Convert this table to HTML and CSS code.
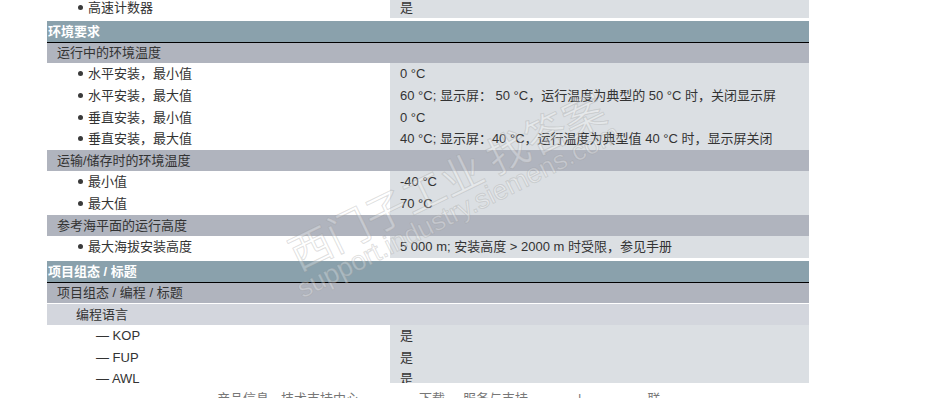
FILE: index.html
```html
<!DOCTYPE html>
<html lang="zh-CN">
<head>
<meta charset="utf-8">
<title>技术参数</title>
<link rel="stylesheet" href="styles.css">
</head>
<body>
<div class="page">
  <div class="viewport">
    <div class="sheet">
      <div class="row"><div class="lbl bullet">高速计数器</div><div class="val">是</div></div>
      <div class="hdr">环境要求</div>
      <div class="sub first">运行中的环境温度</div>
      <div class="row"><div class="lbl bullet">水平安装，最小值</div><div class="val">0 °C</div></div>
      <div class="row"><div class="lbl bullet">水平安装，最大值</div><div class="val">60 °C; 显示屏： 50 °C，运行温度为典型的 50 °C 时，关闭显示屏</div></div>
      <div class="row"><div class="lbl bullet">垂直安装，最小值</div><div class="val">0 °C</div></div>
      <div class="row"><div class="lbl bullet">垂直安装，最大值</div><div class="val">40 °C; 显示屏：40 °C，运行温度为典型值 40 °C 时，显示屏关闭</div></div>
      <div class="sub">运输/储存时的环境温度</div>
      <div class="row tall"><div class="lbl bullet">最小值</div><div class="val">-40 °C</div></div>
      <div class="row tall"><div class="lbl bullet">最大值</div><div class="val">70 °C</div></div>
      <div class="sub">参考海平面的运行高度</div>
      <div class="row"><div class="lbl bullet">最大海拔安装高度</div><div class="val">5 000 m; 安装高度 &gt; 2000 m 时受限，参见手册</div></div>
      <div class="hdr">项目组态 / 标题</div>
      <div class="sub first">项目组态 / 编程 / 标题</div>
      <div class="sub2">编程语言</div>
      <div class="row"><div class="lbl dash">— KOP</div><div class="val">是</div></div>
      <div class="row"><div class="lbl dash">— FUP</div><div class="val">是</div></div>
      <div class="row"><div class="lbl dash">— AWL</div><div class="val">是</div></div>
    </div>
  </div>
  <div class="footer">
    <span class="f1">产品信息</span><span class="f2">技术支持中心</span><span class="f3">下载</span><span class="f4">服务与支持</span><span class="f5">|</span><span class="f6">联</span>
  </div>
  <div class="wm" aria-hidden="true">
    <div class="wm-cn">西门子工业 找答案</div>
    <div class="wm-en">support.industry.siemens.com</div>
  </div>
</div>
</body>
</html>
```
FILE: styles.css
```css
html, body {
  margin: 0;
  padding: 0;
  background: #fff;
}
body {
  font-family: "Liberation Sans", "Noto Sans CJK SC", sans-serif;
  font-size: 13px;
  color: #333;
}
.page {
  position: relative;
  width: 938px;
  height: 398px;
  overflow: hidden;
}
.viewport {
  margin-left: 47px;
  width: 762px;
  height: 383px;
  overflow: hidden;
}
.sheet {
  margin-top: -3.5px;
}
.row {
  display: grid;
  grid-template-columns: 343px 1fr;
  height: 21.75px;
  line-height: 21.75px;
}
.row.tall {
  height: 22px;
  line-height: 22px;
}
.lbl, .val {
  white-space: nowrap;
}
.val {
  background: #dbdfe3;
  padding-left: 10px;
}
.bullet {
  padding-left: 31px;
}
.bullet::before {
  content: "";
  display: inline-block;
  width: 5px;
  height: 5px;
  border-radius: 50%;
  background: #3a3a3a;
  margin-right: 5px;
  vertical-align: middle;
  position: relative;
  top: -1px;
}
.dash {
  padding-left: 49px;
}
.hdr {
  margin-top: 2.75px;
  height: 21px;
  line-height: 21px;
  background: #8aa1ac;
  color: #fff;
  font-weight: bold;
  padding-left: 1px;
  border-bottom: 1px solid #000;
}
.sub {
  height: 21px;
  line-height: 21px;
  background: #b0b4be;
  padding-left: 10px;
}
.sub.first {
  height: 20px;
  line-height: 20px;
}
.sub2 {
  height: 21.25px;
  line-height: 21.25px;
  background: #d3d6dd;
  padding-left: 29px;
  border-top: 1px solid #fff;
}
.footer {
  display: flex;
  margin-top: 8px;
  padding-left: 217px;
  color: #777;
  line-height: 15px;
  white-space: nowrap;
}
.f2 { margin-left: 12px; }
.f3 { margin-left: 60px; }
.f4 { margin-left: 18px; }
.f5 { margin-left: 50px; }
.f6 { margin-left: 66px; }
.wm {
  position: absolute;
  left: 0;
  top: 0;
  width: 938px;
  height: 398px;
  pointer-events: none;
}
.wm-cn, .wm-en {
  position: absolute;
  line-height: 1;
  white-space: nowrap;
  transform-origin: left bottom;
  color: rgba(255, 255, 255, 0.3);
  -webkit-text-stroke: 1px rgba(150, 150, 150, 0.3);
}
.wm-cn {
  left: 300px;
  top: 232px;
  font-size: 42px;
  font-family: "Noto Sans CJK SC", sans-serif;
  transform: rotate(-26deg);
}
.wm-en {
  left: 305px;
  top: 276px;
  font-size: 27px;
  font-family: "Liberation Sans", sans-serif;
  transform: rotate(-26.5deg);
}
```
